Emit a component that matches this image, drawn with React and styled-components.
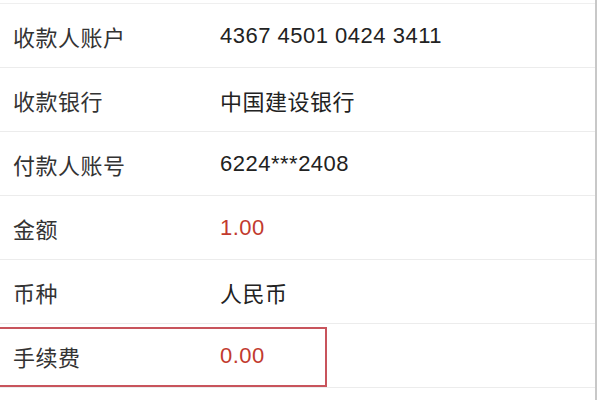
import React from "react";
import styled, { createGlobalStyle } from "styled-components";

const GlobalStyle = createGlobalStyle`
  html, body {
    margin: 0;
    padding: 0;
    background: #fff;
  }
  body {
    font-family: "Liberation Sans", "Noto Sans CJK SC", sans-serif;
  }
`;

const Wrapper = styled.div`
  width: 597px;
  height: 400px;
  padding-top: 3px;
  box-sizing: border-box;
  border-right: 2px solid #c8c8c8;
  background: #fff;
  overflow: hidden;
`;

const List = styled.div`
  display: flex;
  flex-direction: column;
  border-top: 1px solid #efefef;
`;

const Row = styled.div`
  position: relative;
  display: flex;
  align-items: center;
  height: 63px;
  border-bottom: 1px solid #ececec;

  ${({ $highlight }) =>
    $highlight &&
    `
    &::after {
      content: "";
      position: absolute;
      left: -2px;
      top: 3px;
      width: 325px;
      height: 56px;
      border: 2px solid #c8545c;
      box-sizing: content-box;
      pointer-events: none;
    }
  `}
`;

const Label = styled.div`
  width: 207px;
  padding-left: 13px;
  font-size: 22px;
  color: #333;
  letter-spacing: 0.5px;
`;

const Value = styled.div`
  font-size: 22px;
  letter-spacing: 0.5px;
  color: ${({ $red }) => ($red ? "#c23a2e" : "#222")};
`;

const rows = [
  { label: "收款人账户", value: "4367 4501 0424 3411" },
  { label: "收款银行", value: "中国建设银行" },
  { label: "付款人账号", value: "6224***2408" },
  { label: "金额", value: "1.00", red: true },
  { label: "币种", value: "人民币" },
  { label: "手续费", value: "0.00", red: true, highlight: true },
];

const App = () => {
  return (
    <>
      <GlobalStyle />
      <Wrapper>
        <List>
          {rows.map((r) => (
            <Row key={r.label} $highlight={r.highlight}>
              <Label>{r.label}</Label>
              <Value $red={r.red}>{r.value}</Value>
            </Row>
          ))}
        </List>
      </Wrapper>
    </>
  );
};

export default App;
